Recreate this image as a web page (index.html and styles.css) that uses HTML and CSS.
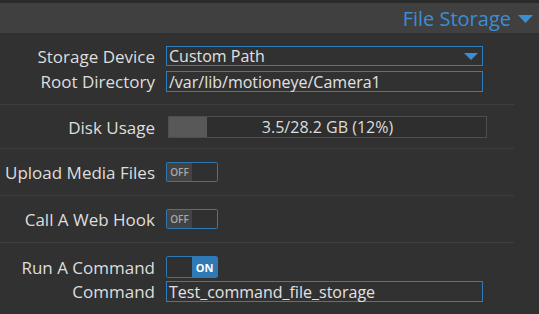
FILE: index.html
```html
<!DOCTYPE html>
<html>
<head>
<meta charset="utf-8">
<link rel="stylesheet" href="styles.css">
</head>
<body>
<div class="topstrip"></div>
<div class="header">
  <span class="title">File Storage</span>
  <svg class="hdr-arrow" width="15" height="8" viewBox="0 0 15 8"><polygon points="0,0 15,0 7.5,8" fill="#3a8ed6"/></svg>
</div>
<div class="settings">
  <div class="group g1">
    <div class="row r20">
      <div class="label">Storage Device</div>
      <div class="field select">
        <span>Custom Path</span>
        <svg class="sel-arrow" width="14" height="7" viewBox="0 0 14 7"><polygon points="0,0 14,0 7,7" fill="#3a8ed6"/></svg>
      </div>
    </div>
    <div class="row r21">
      <div class="label">Root Directory</div>
      <div class="field input"><span>/var/lib/motioneye/Camera1</span></div>
    </div>
  </div>
  <div class="group g2">
    <div class="row r22">
      <div class="label">Disk Usage</div>
      <div class="bar">
        <div class="fill" style="width:12%"></div>
        <div class="bar-text">3.5/28.2 GB (12%)</div>
      </div>
    </div>
  </div>
  <div class="group g3">
    <div class="row r20">
      <div class="label">Upload Media Files</div>
      <div class="toggle off"><span class="knob-text">OFF</span><span class="rest"></span></div>
    </div>
  </div>
  <div class="group g3">
    <div class="row r20">
      <div class="label">Call A Web Hook</div>
      <div class="toggle off"><span class="knob-text">OFF</span><span class="rest"></span></div>
    </div>
  </div>
  <div class="group g5">
    <div class="row r22">
      <div class="label">Run A Command</div>
      <div class="toggle on"><span class="rest"></span><span class="knob-text">ON</span></div>
    </div>
    <div class="row r21">
      <div class="label">Command</div>
      <div class="field input"><span>Test_command_file_storage</span></div>
    </div>
  </div>
</div>
</body>
</html>
```
FILE: styles.css
```css
html, body {
  margin: 0;
  padding: 0;
  background: #313131;
  font-family: "Open Sans", "Noto Sans", sans-serif;
  color: #dedede;
  overflow: hidden;
}
.topstrip {
  height: 3px;
  background: #2a2a2a;
}
.header {
  height: 30px;
  background: #404040;
  display: flex;
  align-items: center;
  justify-content: flex-end;
  padding-right: 6px;
}
.title {
  color: #3a8ed6;
  font-size: 20px;
  margin-right: 7px;
}
.hdr-arrow {
  display: block;
  margin-top: 1px;
}
.settings {
  width: 514px;
}
.group {
  border-bottom: 1px solid #3e3e3e;
  display: flex;
  flex-direction: column;
}
.g1 { padding: 13px 0 12px; gap: 5px; }
.g2 { padding: 11px 0 10px; }
.g3 { padding: 13px 0 13px; }
.g5 { padding: 13px 0 0; gap: 3px; border-bottom: none; }
.row {
  display: flex;
  align-items: center;
}
.r20 { height: 20px; }
.r21 { height: 21px; }
.r22 { height: 22px; }
.label {
  width: 155px;
  text-align: right;
  font-size: 17px;
  margin-right: 11px;
  white-space: nowrap;
}
.field {
  box-sizing: border-box;
  width: 317px;
  height: 100%;
  border: 1px solid #2f7dbd;
  display: flex;
  align-items: center;
  padding-left: 2px;
  font-size: 16px;
  color: #e2e2e2;
}
.select {
  justify-content: space-between;
  padding-right: 4px;
}
.sel-arrow { display: block; }
.bar {
  position: relative;
  box-sizing: border-box;
  margin-left: 2px;
  width: 319px;
  height: 100%;
  border: 1px solid #4e4e4e;
  background: #2e2e2e;
}
.fill {
  height: 100%;
  background: #585858;
}
.bar-text {
  position: absolute;
  inset: 0;
  display: flex;
  align-items: center;
  justify-content: center;
  font-size: 16px;
  color: #dcdcdc;
}
.toggle {
  box-sizing: border-box;
  width: 52px;
  height: 100%;
  border: 1px solid #2f7ab4;
  border-radius: 2px;
  display: flex;
  overflow: hidden;
}
.toggle .knob-text,
.toggle .rest {
  width: 50%;
  display: flex;
  align-items: center;
  justify-content: center;
  font-size: 10px;
  font-weight: 600;
}
.toggle.off .knob-text {
  background: #434343;
  color: #a8a8a8;
}
.toggle.off .rest { background: #303030; }
.toggle.on .rest { background: #303030; }
.toggle.on .knob-text {
  background: #2f7ab4;
  color: #ffffff;
  font-weight: 700;
  font-size: 11px;
}
```
